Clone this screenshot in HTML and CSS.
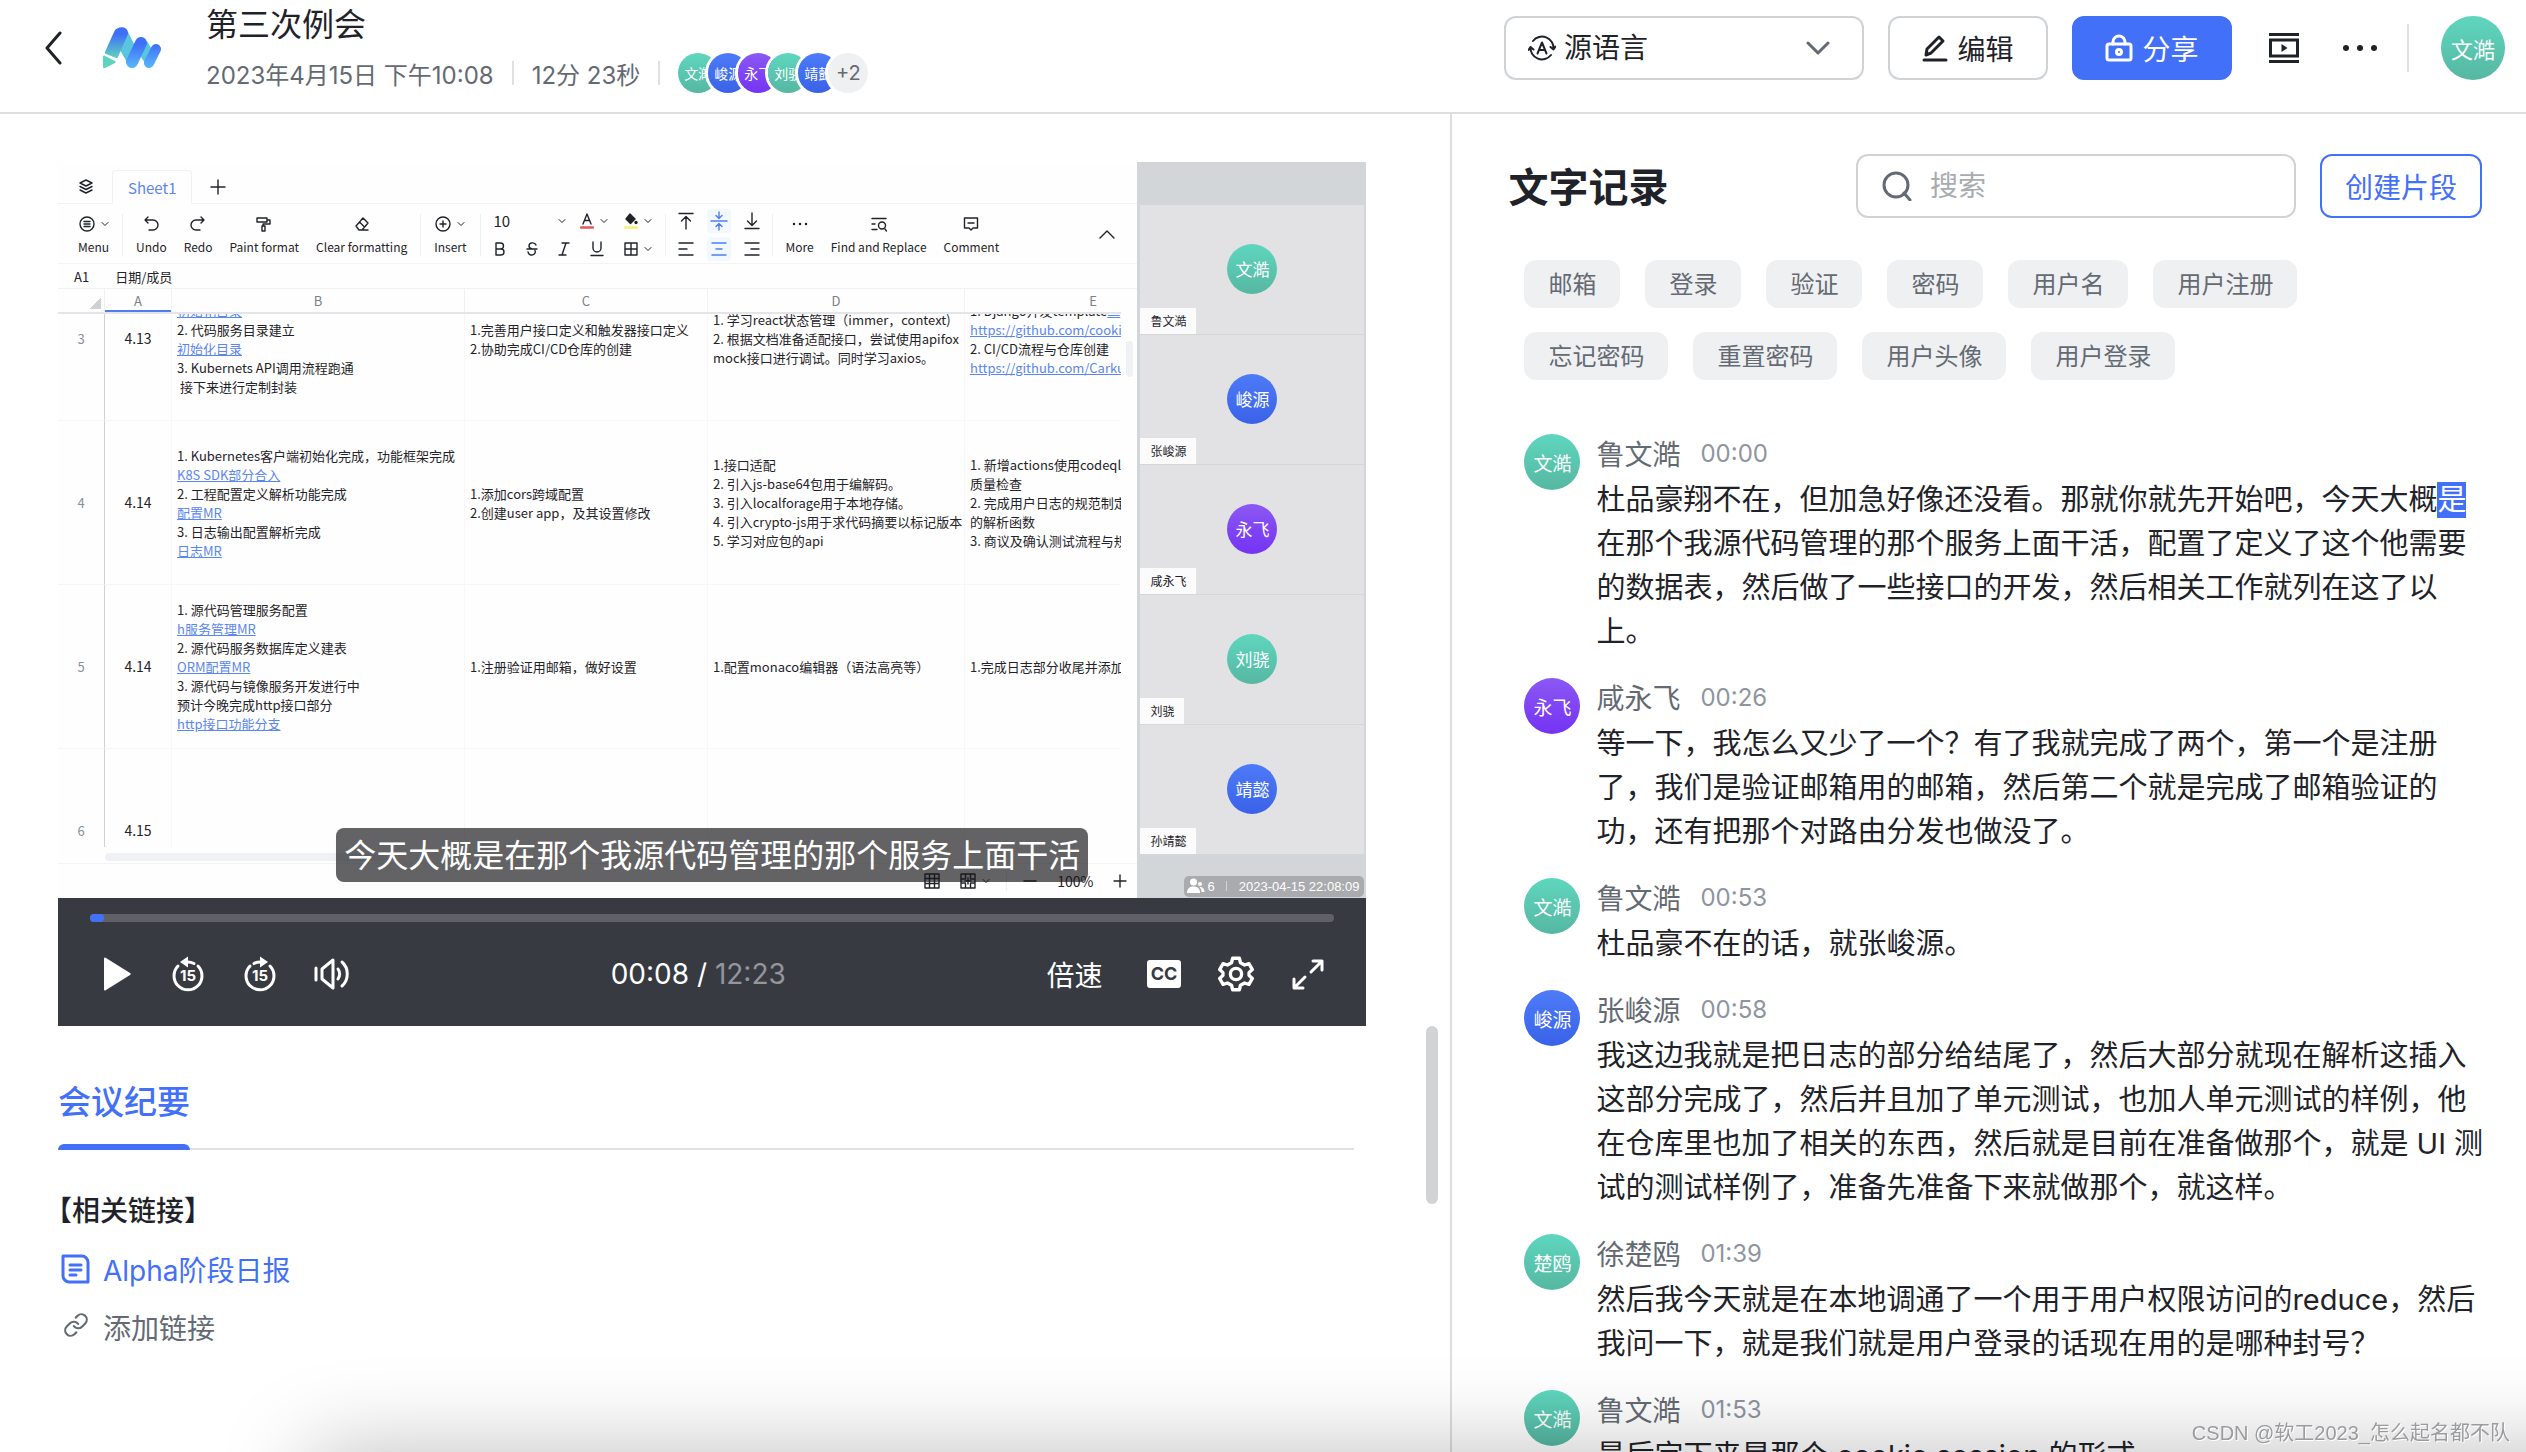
FILE: index.html
```html
<!DOCTYPE html>
<html lang="zh-CN">
<head>
  <meta charset="UTF-8">
  <meta name="viewport" content="width=device-width, initial-scale=1">
  <title>第三次例会</title>
  <link rel="stylesheet" href="styles.css">
</head>
<body>
  <svg class="sprite" aria-hidden="true">
    <symbol id="i-chev" viewBox="0 0 8 8"><path d="M1 2.500l3 3 3-3"/></symbol>
    <symbol id="i-people" viewBox="0 0 18 16"><circle cx="6.500" cy="4" r="3.500"/><path d="M0 15c0-4 2-6.500 6.500-6.500S13 11 13 15z"/><circle cx="13" cy="6" r="2"/><path d="M12.500 9c3.500 0 5 2 5 5h-3c0-2-.5-3.500-2-5z"/></symbol>
  </svg>

  <header class="topbar">
    <button class="back" aria-label="返回">
      <svg width="18" height="34" viewBox="0 0 18 34"><path d="M16 2L3 17l13 15"/></svg>
    </button>
    <svg class="logo" width="60" height="44" viewBox="0 0 60 44">
      <defs>
        <linearGradient id="lg1" gradientUnits="userSpaceOnUse" x1="0" y1="8" x2="0" y2="32"><stop offset="0" stop-color="#3f6ff8"/><stop offset="1" stop-color="#5fd3bd"/></linearGradient>
        <linearGradient id="lg2" gradientUnits="userSpaceOnUse" x1="0" y1="18" x2="0" y2="42"><stop offset="0" stop-color="#3f6ff8"/><stop offset="1" stop-color="#57b8fb"/></linearGradient>
      </defs>
      <path d="M26 6l7 14-7 18-8-14z" fill="#58c6dc"/>
      <path d="M45 15l6 10-6 15-8-12z" fill="#58c6dc"/>
      <path d="M3 26l9-20C15-1 27 0 26 8L16 31c0 1-1 1-2 1L4 28c-1 0-1-1-1-2z" fill="url(#lg1)"/>
      <path d="M1 31c0-1 1-2 2-1l10 5c1 1 1 2 0 2L3 42c-1 0-2 0-2-1z" fill="#5fd3bd"/>
      <path d="M39 17l-9 19" fill="none" stroke="url(#lg2)" stroke-width="12"/>
      <path d="M54 23l-7 14" fill="none" stroke="url(#lg2)" stroke-width="10"/>
    </svg>
    <div class="meeting">
      <h1>第三次例会</h1>
      <div class="meta">
        <span>2023年4月15日 下午10:08</span>
        <span class="sep"></span>
        <span>12分 23秒</span>
        <span class="sep"></span>
        <div class="members">
          <span class="avatar green">文澔</span>
          <span class="avatar blue">峻源</span>
          <span class="avatar purple">永飞</span>
          <span class="avatar green">刘骁</span>
          <span class="avatar blue">靖懿</span>
          <span class="avatar more">+2</span>
        </div>
      </div>
    </div>
    <div class="actions">
      <div class="language">
        <svg width="28" height="28" viewBox="0 0 28 28"><path d="M5 7a11.500 11.500 0 0 1 20.500 8M23 21A11.500 11.500 0 0 1 2.500 13M.500 16l2-3 3 2.500M27.500 12.500l-2 3-3-2.500"/><path d="M9.500 19.500L14 8.500l4.500 11M11 16h6"/></svg>
        <select aria-label="语言">
          <option>源语言</option>
        </select>
        <svg class="arrow" width="24" height="14" viewBox="0 0 24 14"><path d="M2 2l10 10L22 2"/></svg>
      </div>
      <button class="btn">
        <svg width="26" height="28" viewBox="0 0 26 28"><path d="M2 26h22M4 21l1-6L17 3l4 4L9 19z"/></svg>
        编辑
      </button>
      <button class="btn primary">
        <svg width="28" height="28" viewBox="0 0 28 28"><rect x="2" y="10" width="24" height="16" rx="2"/><path d="M8 10V8a6 6 0 0 1 12 0v2"/><circle cx="14" cy="18" r="2.500"/></svg>
        分享
      </button>
      <button class="icon-btn" aria-label="片段">
        <svg width="32" height="32" viewBox="0 0 32 32"><path d="M1 2.500h30M1 29.500h30"/><rect x="2.500" y="8" width="27" height="16"/><path d="M13.500 12l6 4-6 4z" fill="#1f2329" stroke="none"/></svg>
      </button>
      <button class="icon-btn" aria-label="更多">
        <svg width="36" height="8" viewBox="0 0 36 8"><g fill="#1f2329" stroke="none"><circle cx="4" cy="4" r="3"/><circle cx="18" cy="4" r="3"/><circle cx="32" cy="4" r="3"/></g></svg>
      </button>
      <span class="bar"></span>
      <span class="avatar green me">文澔</span>
    </div>
  </header>

  <main>
    <section class="left">
      <div class="player">
        <div class="frame">
          <div class="sheet">
            <div class="sheet-tabs">
              <svg width="16" height="16" viewBox="0 0 16 16"><path d="M8 1l6 3-6 3-6-3zM2 7.500l6 3 6-3M2 11l6 3 6-3"/></svg>
              <span class="sheet-tab">Sheet1</span>
              <svg width="16" height="16" viewBox="0 0 16 16"><path d="M8 1v14M1 8h14"/></svg>
            </div>

            <div class="toolbar">
              <button class="tool"><span><svg width="16" height="16" viewBox="0 0 16 16"><circle cx="8" cy="8" r="7"/><path d="M5 5.500h6M5 8h6M5 10.500h6"/></svg><svg class="c"><use href="#i-chev"/></svg></span>Menu</button>
              <i></i>
              <button class="tool"><span><svg width="16" height="16" viewBox="0 0 16 16"><path d="M5 1L2 4l3 3M2 4h8a5 5 0 0 1 0 10H6"/></svg></span>Undo</button>
              <button class="tool"><span><svg width="16" height="16" viewBox="0 0 16 16"><path d="M11 1l3 3-3 3M14 4H6a5 5 0 0 0 0 10h4"/></svg></span>Redo</button>
              <button class="tool"><span><svg width="16" height="16" viewBox="0 0 16 16"><path d="M1 2h10v4H1zM11 4h3v4H7v2M6 10h3v5H6z"/></svg></span>Paint format</button>
              <button class="tool"><span><svg width="16" height="16" viewBox="0 0 16 16"><path d="M9 2l5 5-6 7H5l-3-4zM5.500 6l5 5M8 14h6"/></svg></span>Clear formatting</button>
              <i></i>
              <button class="tool"><span><svg width="16" height="16" viewBox="0 0 16 16"><circle cx="8" cy="8" r="7"/><path d="M8 5v6M5 8h6"/></svg><svg class="c"><use href="#i-chev"/></svg></span>Insert</button>
              <i></i>
              <div class="format">
                <div class="format-row">
                  <span class="size">10<svg class="c"><use href="#i-chev"/></svg></span>
                  <span class="pick"><svg width="14" height="16" viewBox="0 0 14 16"><path d="M3 11l4-10 4 10M4.500 7.500h5"/><path d="M1 14.500h12" stroke="#e2575b" stroke-width="2.500"/></svg><svg class="c"><use href="#i-chev"/></svg></span>
                  <span class="pick"><svg width="14" height="16" viewBox="0 0 14 16"><path d="M6 1l5 5-4.500 4.500L2 6z" fill="#1f2329"/><circle cx="12" cy="9.500" r="1" fill="#1f2329"/><path d="M1 14.500h12" stroke="#f7f075" stroke-width="2.500"/></svg><svg class="c"><use href="#i-chev"/></svg></span>
                </div>
                <div class="format-row marks">
                  <svg width="12" height="16" viewBox="0 0 12 16"><path d="M2 2h4.500a3 3 0 0 1 0 6H2zM2 8h5a3 3 0 0 1 0 6H2z"/></svg>
                  <svg width="12" height="16" viewBox="0 0 12 16"><path d="M10 4C9 1 3 1 3 5c0 2 1.500 2.500 3 3M1 8h10M9 9.500C11 14 3 16 2 11"/></svg>
                  <svg width="12" height="16" viewBox="0 0 12 16"><path d="M4 2h7M1 14h7M8 2L4 14"/></svg>
                  <svg width="14" height="16" viewBox="0 0 14 16"><path d="M3 1v6a4 4 0 0 0 8 0V1M1 14.500h12"/></svg>
                  <span class="pick"><svg width="14" height="16" viewBox="0 0 14 16"><path d="M1 2h12v12H1zM7 2v12M1 8h12"/></svg><svg class="c"><use href="#i-chev"/></svg></span>
                </div>
              </div>
              <i></i>
              <div class="aligns">
                <svg viewBox="0 0 24 24"><path d="M5 4.500h14M12 20V8M7.500 12L12 7.500l4.500 4.500"/></svg>
                <svg class="on" viewBox="0 0 24 24"><path d="M4 12h16M12 3v6M9 6.500l3 3 3-3M12 21v-6M9 17.500l3-3 3 3"/></svg>
                <svg viewBox="0 0 24 24"><path d="M5 19.500h14M12 4v12M7.500 12l4.500 4.500 4.500-4.500"/></svg>
                <svg viewBox="0 0 24 24"><path d="M5 6h14M5 12h8M5 18h14"/></svg>
                <svg class="on" viewBox="0 0 24 24"><path d="M5 6h14M9 12h6M5 18h14"/></svg>
                <svg viewBox="0 0 24 24"><path d="M5 6h14M11 12h8M5 18h14"/></svg>
              </div>
              <i></i>
              <button class="tool"><span><svg width="16" height="16" viewBox="0 0 16 16"><path d="M2 8h0M8 8h0M14 8h0" stroke-width="2.500"/></svg></span>More</button>
              <button class="tool"><span><svg width="16" height="16" viewBox="0 0 16 16"><path d="M1 2.500h14M1 8h3M1 13.500h5M14 13l1.500 2"/><circle cx="11" cy="9.500" r="3.500"/></svg></span>Find and Replace</button>
              <button class="tool"><span><svg width="16" height="16" viewBox="0 0 16 16"><path d="M1.500 2h13v10H10l-2 2-2-2H1.500zM5 7h6"/></svg></span>Comment</button>
              <svg class="fold" width="16" height="16" viewBox="0 0 16 16"><path d="M1 11l7-7 7 7"/></svg>
            </div>

            <div class="formula"><span>A1</span><span>日期/成员</span></div>

            <div class="grid-view">
              <div class="col-names">
                <span class="corner"></span><span class="current">A</span><span>B</span><span>C</span><span>D</span><span>E</span>
              </div>
              <div class="grid-body">
                <table>
                  <colgroup><col class="w-no"><col class="w-a"><col class="w-b"><col class="w-c"><col class="w-d"><col class="w-d"></colgroup>
                  <tbody>
                    <tr>
                      <th>3</th>
                      <td class="date">4.13</td>
                      <td>1. 代码服务初始化<br><a href="#">初始化目录</a><br>2. 代码服务目录建立<br><a href="#">初始化目录</a><br>3. Kubernets API调用流程跑通<br>&nbsp;接下来进行定制封装</td>
                      <td>1.完善用户接口定义和触发器接口定义<br>2.协助完成CI/CD仓库的创建</td>
                      <td>1. 学习react状态管理（immer，context)<br>2. 根据文档准备适配接口，尝试使用apifox<br>mock接口进行调试。同时学习axios。</td>
                      <td>1. Django开发template<a href="#">二</a><br><a href="#">https://github.com/cookiecutter</a><br>2. CI/CD流程与仓库创建<br><a href="#">https://github.com/CarkusL</a></td>
                    </tr>
                    <tr>
                      <th>4</th>
                      <td class="date">4.14</td>
                      <td>1. Kubernetes客户端初始化完成，功能框架完成<br><a href="#">K8S SDK部分合入</a><br>2. 工程配置定义解析功能完成<br><a href="#">配置MR</a><br>3. 日志输出配置解析完成<br><a href="#">日志MR</a></td>
                      <td>1.添加cors跨域配置<br>2.创建user app，及其设置修改</td>
                      <td>1.接口适配<br>2. 引入js-base64包用于编解码。<br>3. 引入localforage用于本地存储。<br>4. 引入crypto-js用于求代码摘要以标记版本<br>5. 学习对应包的api</td>
                      <td>1. 新增actions使用codeql<br>质量检查<br>2. 完成用户日志的规范制定<br>的解析函数<br>3. 商议及确认测试流程与规范</td>
                    </tr>
                    <tr>
                      <th>5</th>
                      <td class="date">4.14</td>
                      <td>1. 源代码管理服务配置<br><a href="#">h服务管理MR</a><br>2. 源代码服务数据库定义建表<br><a href="#">ORM配置MR</a><br>3. 源代码与镜像服务开发进行中<br>预计今晚完成http接口部分<br><a href="#">http接口功能分支</a></td>
                      <td>1.注册验证用邮箱，做好设置</td>
                      <td>1.配置monaco编辑器（语法高亮等）</td>
                      <td>1.完成日志部分收尾并添加</td>
                    </tr>
                    <tr>
                      <th>6</th>
                      <td class="date">4.15</td>
                      <td></td>
                      <td></td>
                      <td></td>
                      <td></td>
                    </tr>
                  </tbody>
                </table>
              </div>
              <span class="v-thumb"></span>
            </div>

            <div class="h-scroll"><span></span></div>
            <div class="sheet-status">
              <svg width="16" height="16" viewBox="0 0 16 16"><path d="M1 1h14v14H1zM5.500 1v14M10.500 1v14M1 5.500h14M1 10.500h14"/></svg>
              <span class="pick"><svg width="16" height="16" viewBox="0 0 16 16"><path d="M1 1h14v14H1zM5.500 1v5H1M10.500 1v5H15M5.500 15v-5H1M10.500 15v-5H15M8 5v6M5 8h6"/></svg><svg class="c"><use href="#i-chev"/></svg></span>
              <i></i>
              <svg width="14" height="14" viewBox="0 0 14 14"><path d="M1 7h12"/></svg>
              <span class="zoom">100%</span>
              <svg width="14" height="14" viewBox="0 0 14 14"><path d="M7 1v12M1 7h12"/></svg>
            </div>
          </div>

          <aside class="people">
            <div class="person"><span class="avatar green">文澔</span><span class="tag-name">鲁文澔</span></div>
            <div class="person"><span class="avatar blue">峻源</span><span class="tag-name">张峻源</span></div>
            <div class="person"><span class="avatar purple">永飞</span><span class="tag-name">咸永飞</span></div>
            <div class="person"><span class="avatar green">刘骁</span><span class="tag-name">刘骁</span></div>
            <div class="person"><span class="avatar blue">靖懿</span><span class="tag-name">孙靖懿</span></div>
          </aside>

          <div class="stamp"><svg width="18" height="16"><use href="#i-people"/></svg>6<i></i>2023-04-15 22:08:09</div>
          <p class="subtitle">今天大概是在那个我源代码管理的那个服务上面干活</p>
        </div>

        <div class="controls">
          <div class="progress"><span></span></div>
          <div class="control-row">
            <div class="side">
              <button aria-label="播放"><svg width="36" height="36" viewBox="0 0 36 36"><path d="M6 3c0-1.500 1-2 2-1l24 15c1 .500 1 1.500 0 2L8 34c-1 1-2 .5-2-1z" fill="#fff" stroke="none"/></svg></button>
              <button aria-label="后退15秒"><svg width="36" height="36" viewBox="0 0 36 36"><path d="M8 10a14 14 0 1 0 20 0M16 6a14 14 0 0 1 8 1.500"/><path d="M18 .500v11L10 6z" fill="#fff" stroke="none"/><text x="18" y="25">15</text></svg></button>
              <button aria-label="前进15秒"><svg width="36" height="36" viewBox="0 0 36 36"><path d="M28 10a14 14 0 1 1-20 0M20 6a14 14 0 0 0-8 1.500"/><path d="M18 .500v11L26 6z" fill="#fff" stroke="none"/><text x="18" y="25">15</text></svg></button>
              <button aria-label="音量"><svg width="36" height="36" viewBox="0 0 36 36"><path d="M2 12v12M8 13v10l11 9V4L8 13zM24 13c2 3 2 7 0 10M28 6c7 6 7 18 0 24"/></svg></button>
            </div>
            <div class="time">00:08 / <span>12:23</span></div>
            <div class="side">
              <button class="speed">倍速</button>
              <button aria-label="字幕"><svg width="36" height="36" viewBox="0 0 36 36"><rect x="1" y="4" width="34" height="28" rx="3" fill="#fff" stroke="none"/><text class="cc" x="18" y="24">CC</text></svg></button>
              <button aria-label="设置"><svg width="36" height="36" viewBox="0 0 32 32"><path d="M13 2h6l1 4 3.600 2 3.900-1.200 3 5.200-2.900 2.800v2.400l2.900 2.800-3 5.200-3.900-1.200L20 26l-1 4h-6l-1-4-3.600-2-3.900 1.200-3-5.200 2.900-2.800v-2.400L1.500 12l3-5.200L8.400 8 12 6z"/><circle cx="16" cy="16" r="5"/></svg></button>
              <button aria-label="全屏"><svg width="36" height="36" viewBox="0 0 36 36"><path d="M23 5h9v9M32 5L21 16M13 32H4v-9M4 32l11-11"/></svg></button>
            </div>
          </div>
        </div>
      </div>

      <div class="tabs"><a href="#minutes">会议纪要</a></div>
      <div class="minutes" id="minutes">
        <h2>【相关链接】</h2>
        <a class="doc" href="#"><svg width="30" height="32" viewBox="0 0 30 32"><path d="M3 3h19c3 0 6 3 6 6v20H9c-3 0-6-3-6-6zM10 12h11M10 17h11M10 22h6"/></svg>Alpha阶段日报</a>
        <button class="add"><svg width="26" height="26" viewBox="0 0 24 24"><path d="M10 13a5 5 0 0 0 7.540.540l3-3a5 5 0 0 0-7.070-7.070l-1.720 1.710"/><path d="M14 11a5 5 0 0 0-7.540-.540l-3 3a5 5 0 0 0 7.070 7.070l1.710-1.710"/></svg>添加链接</button>
      </div>
      <span class="scroll-thumb"></span>
    </section>

    <section class="right">
      <div class="transcript-head">
        <h2>文字记录</h2>
        <label class="search">
          <svg width="30" height="30" viewBox="0 0 30 30"><circle cx="14" cy="14" r="12"/><path d="M22 22l6 7"/></svg>
          <input type="text" placeholder="搜索" aria-label="搜索">
        </label>
        <button class="create">创建片段</button>
      </div>
      <div class="keywords">
        <button>邮箱</button><button>登录</button><button>验证</button><button>密码</button><button>用户名</button><button>用户注册</button>
        <button>忘记密码</button><button>重置密码</button><button>用户头像</button><button>用户登录</button>
      </div>

      <div class="transcript">
        <article>
          <span class="avatar green">文澔</span>
          <div>
            <div class="speaker">鲁文澔 <time>00:00</time></div>
            <p>杜品豪翔不在，但加急好像还没看。那就你就先开始吧，今天大概<mark>是</mark>在那个我源代码管理的那个服务上面干活，配置了定义了这个他需要的数据表，然后做了一些接口的开发，然后相关工作就列在这了以上。</p>
          </div>
        </article>
        <article>
          <span class="avatar purple">永飞</span>
          <div>
            <div class="speaker">咸永飞 <time>00:26</time></div>
            <p>等一下，我怎么又少了一个？有了我就完成了两个，第一个是注册了，我们是验证邮箱用的邮箱，然后第二个就是完成了邮箱验证的功，还有把那个对路由分发也做没了。</p>
          </div>
        </article>
        <article>
          <span class="avatar green">文澔</span>
          <div>
            <div class="speaker">鲁文澔 <time>00:53</time></div>
            <p>杜品豪不在的话，就张峻源。</p>
          </div>
        </article>
        <article>
          <span class="avatar blue">峻源</span>
          <div>
            <div class="speaker">张峻源 <time>00:58</time></div>
            <p>我这边我就是把日志的部分给结尾了，然后大部分就现在解析这插入这部分完成了，然后并且加了单元测试，也加人单元测试的样例，他在仓库里也加了相关的东西，然后就是目前在准备做那个，就是 UI 测试的测试样例了，准备先准备下来就做那个，就这样。</p>
          </div>
        </article>
        <article>
          <span class="avatar green">楚鸥</span>
          <div>
            <div class="speaker">徐楚鸥 <time>01:39</time></div>
            <p>然后我今天就是在本地调通了一个用于用户权限访问的reduce，然后我问一下，就是我们就是用户登录的话现在用的是哪种封号？</p>
          </div>
        </article>
        <article>
          <span class="avatar green">文澔</span>
          <div>
            <div class="speaker">鲁文澔 <time>01:53</time></div>
            <p>最后定下来是那个 cookie session 的形式</p>
          </div>
        </article>
      </div>
    </section>
  </main>

  <div class="dock-shadow"></div>
  <div class="watermark">CSDN @软工2023_怎么起名都不队</div>
</body>
</html>
```
FILE: styles.css
```css
* {
  box-sizing: border-box;
}

body {
  margin: 0;
  height: 100vh;
  overflow: hidden;
  display: flex;
  flex-direction: column;
  font-family: Inter, "Noto Sans CJK SC", sans-serif;
  font-size: 28px;
  color: #1f2329;
  background: #fff;
}

h1, h2, p {
  margin: 0;
}

button, input, select {
  font: inherit;
  color: inherit;
  border: 0;
  padding: 0;
  background: none;
}

a {
  color: #4370f8;
  text-decoration: none;
}

svg {
  flex: none;
  fill: none;
  stroke: currentColor;
  stroke-width: 3;
  stroke-linecap: round;
  stroke-linejoin: round;
}

.sprite {
  display: none;
}

/* avatars */
.avatar {
  flex: none;
  display: flex;
  align-items: center;
  justify-content: center;
  width: 56px;
  height: 56px;
  border-radius: 50%;
  font-size: 19px;
  white-space: nowrap;
  color: #fff;
}

.green {
  background: linear-gradient(#5fd6be, #56b7a2);
}

.blue {
  background: linear-gradient(#4d7bf8, #3a62e8);
}

.purple {
  background: linear-gradient(#8b58f3, #7433f3);
}

/* top bar */
.topbar {
  flex: none;
  display: flex;
  align-items: center;
  height: 114px;
  padding: 0 21px 16px 44px;
  border-bottom: 2px solid #dcdee0;
}

.back {
  display: flex;
}

.logo {
  margin: 0 44px 0 40px;
  stroke: none;
}

.meeting {
  display: flex;
  flex-direction: column;
  gap: 6px;
}

.meeting h1 {
  font-size: 32px;
  font-weight: 400;
  line-height: 44px;
}

.meta {
  display: flex;
  align-items: center;
  gap: 18px;
  height: 40px;
  font-size: 24px;
  color: #646a73;
}

.sep {
  width: 2px;
  height: 24px;
  background: #dee0e3;
}

.members {
  display: flex;
}

.members .avatar {
  width: 40px;
  height: 40px;
  margin-right: -10px;
  font-size: 14px;
  box-shadow: 0 0 0 3px #fff;
}

.members .more {
  font-size: 20px;
  color: #646a73;
  background: #eff0f1;
}

.actions {
  display: flex;
  align-items: center;
  gap: 24px;
  margin-left: auto;
}

.language {
  display: flex;
  align-items: center;
  gap: 8px;
  width: 360px;
  height: 64px;
  padding: 0 32px 0 22px;
  border: 2px solid #d0d3d6;
  border-radius: 12px;
}

.language svg {
  stroke-width: 2;
}

.language select {
  flex: 1;
  appearance: none;
}

.language .arrow {
  stroke-width: 3;
  color: #646a73;
}

.btn {
  display: flex;
  align-items: center;
  justify-content: center;
  gap: 9px;
  width: 160px;
  height: 64px;
  border: 2px solid #d0d3d6;
  border-radius: 12px;
}

.btn.primary {
  color: #fff;
  border-color: #4370f8;
  background: #4370f8;
}

.icon-btn {
  display: flex;
  margin-left: 12px;
}

.icon-btn + .icon-btn {
  margin-left: 18px;
}

.icon-btn svg {
  stroke-linecap: butt;
  stroke-linejoin: miter;
}

.bar {
  width: 2px;
  height: 48px;
  margin: 0 8px 0 5px;
  background: #dee0e3;
}

.avatar.me {
  width: 64px;
  height: 64px;
  font-size: 22px;
}

/* columns */
main {
  flex: 1;
  min-height: 0;
  display: flex;
}

.left {
  position: relative;
  width: 57.5%;
  padding: 48px 84px 0 58px;
  border-right: 2px solid #dcdee0;
}

.scroll-thumb {
  position: absolute;
  top: 912px;
  right: 12px;
  width: 12px;
  height: 178px;
  border-radius: 6px;
  background: #d2d3d5;
}

/* video frame */
.frame {
  position: relative;
  display: flex;
  aspect-ratio: 16 / 9;
  font-family: "Noto Sans CJK SC", sans-serif;
  font-size: 13px;
}

.frame svg {
  stroke-width: 1.4;
}

.frame svg.c {
  width: 8px;
  height: 8px;
  stroke-width: 1;
}

.sheet {
  flex: 1;
  min-width: 0;
  display: flex;
  flex-direction: column;
  background: #fefefe;
}

.sheet-tabs {
  display: flex;
  align-items: center;
  gap: 18px;
  height: 42px;
  padding: 8px 0 0 20px;
  border-bottom: 1px solid #f0f1f2;
}

.sheet-tab {
  height: 34px;
  padding: 0 15px;
  line-height: 34px;
  font-size: 15px;
  color: #5b86ee;
  border: 1px solid #f0f1f2;
  border-bottom-color: #fefefe;
  border-radius: 4px 4px 0 0;
}

.toolbar {
  display: flex;
  align-items: center;
  gap: 17px;
  height: 60px;
  padding: 2px 22px 0 20px;
  border-bottom: 1px solid #f3f4f5;
}

.toolbar > i,
.sheet-status i {
  width: 1px;
  height: 42px;
  margin: 0 -4px;
  background: #eeeff0;
}

.tool {
  display: flex;
  flex-direction: column;
  align-items: center;
  gap: 6px;
  padding-top: 2px;
  font-size: 12px;
  line-height: 18px;
  white-space: nowrap;
}

.tool span,
.pick {
  display: flex;
  align-items: center;
  gap: 6px;
}

.format-row {
  display: flex;
  align-items: center;
  height: 28px;
}

.format-row > .pick {
  width: 44px;
}

.format-row > .pick:last-child {
  width: 28px;
}

.size {
  display: flex;
  align-items: center;
  justify-content: space-between;
  width: 72px;
  margin-right: 14px;
  font-size: 15px;
}

.format-row.marks {
  gap: 20px;
}

.aligns {
  display: grid;
  grid-template-columns: repeat(3, 24px);
  gap: 4px 9px;
  margin: 0 -5px;
}

.aligns svg {
  width: 24px;
  height: 24px;
  border-radius: 4px;
}

.aligns .on {
  color: #4f7df0;
  background: #f2f8ff;
}

.fold {
  margin-left: auto;
}

.formula {
  display: flex;
  gap: 26px;
  height: 25px;
  padding-left: 16px;
  line-height: 25px;
  border-bottom: 1px solid #f0f1f2;
}

.grid-view {
  position: relative;
  flex: 1;
  min-height: 0;
  display: flex;
  flex-direction: column;
  padding-right: 16px;
}

.v-thumb {
  position: absolute;
  top: 52px;
  right: 4px;
  width: 7px;
  height: 36px;
  border-radius: 4px;
  background: #f0f1f4;
}

.col-names {
  display: grid;
  grid-template-columns: 47px 67px 293px 243px 257px 257px;
  overflow: hidden;
  flex: none;
  height: 25px;
  line-height: 24px;
  text-align: center;
  color: #7b8088;
  border-bottom: 2px solid #e4e5e8;
}

.col-names span {
  border-right: 1px solid #eff0f2;
}

.col-names .current {
  height: 25px;
  box-shadow: inset 0 -4px #4f7df0;
}

.corner {
  background: linear-gradient(135deg, transparent 50%, #cfd1d5 50%) no-repeat 32px 8px / 11px 12px;
}

.grid-body {
  flex: 1;
  min-height: 0;
  overflow: hidden;
}

/* the sheet is scrolled down a little, row 3 is cut at the top */
.grid-body table {
  width: 1164px;
  margin-top: -57px;
  table-layout: fixed;
  border-collapse: separate;
  border-spacing: 0;
}

.w-no { width: 47px; }
.w-a { width: 67px; }
.w-b { width: 293px; }
.w-c { width: 243px; }
.w-d { width: 257px; }

.grid-body tr {
  height: 164px;
}

.grid-body th,
.grid-body td {
  padding: 0 0 0 5px;
  line-height: 19px;
  white-space: nowrap;
  overflow: hidden;
  border-right: 1px solid #f7f7f8;
  border-bottom: 1px solid #f6f6f7;
}

.grid-body th {
  padding: 0;
  font-weight: 400;
  color: #8a8f96;
  border-right: 1px solid #cfd1d5;
}

.grid-body .date {
  padding: 0;
  text-align: center;
  font-size: 14px;
}

.grid-body a {
  color: #5b86ee;
  text-decoration: underline;
}

.h-scroll {
  height: 17px;
  padding: 6px 0 0 47px;
  border-bottom: 1px solid #f3f4f5;
}

.h-scroll span {
  display: block;
  width: 280px;
  height: 8px;
  border-radius: 4px;
  background: #f0f1f4;
}

.sheet-status {
  display: flex;
  align-items: center;
  justify-content: flex-end;
  gap: 20px;
  height: 34px;
  padding-right: 10px;
}

.sheet-status i {
  height: 20px;
}

.zoom {
  font-size: 14px;
}

.people {
  width: 229px;
  padding: 43px 2px 0 3px;
  background: #d2d6d9;
}

.person {
  position: relative;
  display: flex;
  align-items: center;
  justify-content: center;
  height: 130px;
  padding-bottom: 2px;
  border-bottom: 1px solid #d5d6d8;
  background: #e2e2e4;
}

.person .avatar {
  width: 50px;
  height: 50px;
  font-size: 17px;
}

.tag-name {
  position: absolute;
  left: 0;
  bottom: 0;
  padding: 0 10px;
  font-size: 12px;
  line-height: 26px;
  background: #fbfbfc;
}

.stamp {
  position: absolute;
  right: 2px;
  bottom: 1px;
  display: flex;
  align-items: center;
  gap: 2px;
  height: 21px;
  padding: 0 5px 0 3px;
  border-radius: 5px;
  font-family: "Liberation Sans", sans-serif;
  font-size: 13px;
  color: #fff;
  background: #a9abae;
}

.stamp i {
  width: 1px;
  height: 10px;
  margin: 0 10px 0 9px;
  background: #d5d6d8;
}

.stamp svg {
  fill: #fff;
  stroke: none;
}

.subtitle {
  position: absolute;
  bottom: 16px;
  left: 50%;
  transform: translateX(-50%);
  padding: 0 8px 4px;
  border-radius: 8px;
  font-size: 32px;
  line-height: 50px;
  white-space: nowrap;
  color: #fff;
  background: rgba(22, 23, 26, .67);
}

/* player controls */
.controls {
  height: 128px;
  padding: 16px 32px 0;
  color: #fff;
  background: #383a42;
}

.progress {
  height: 8px;
  border-radius: 4px;
  background: #5f6166;
}

.progress span {
  display: block;
  width: 14px;
  height: 8px;
  border-radius: 4px;
  background: #4370f8;
}

.control-row {
  display: flex;
  align-items: center;
  justify-content: space-between;
  height: 104px;
  padding: 0 8px;
}

.side {
  display: flex;
  gap: 36px;
}

.side button {
  display: flex;
  align-items: center;
}

.side .speed {
  margin-right: 8px;
}

.side text {
  font-size: 15px;
  font-weight: 700;
  text-anchor: middle;
  fill: #fff;
  stroke: none;
}

.side .cc {
  font-size: 18px;
  fill: #383a42;
}

.time {
  font-size: 28px;
}

.time span {
  color: #94969b;
}

/* minutes */
.tabs {
  margin: 44px 12px 0 0;
  border-bottom: 2px solid #dee0e3;
}

.tabs a {
  display: inline-block;
  margin-bottom: -2px;
  vertical-align: top;
  font-size: 33px;
  font-weight: 500;
  line-height: 64px;
}

.tabs a::after {
  content: "";
  display: block;
  height: 6px;
  margin-top: 10px;
  border-radius: 6px 6px 0 0;
  background: #4370f8;
}

.minutes {
  display: flex;
  flex-direction: column;
  align-items: flex-start;
  padding-top: 32px;
}

.minutes h2 {
  font-size: 28px;
  font-weight: 500;
  line-height: 58px;
  font-feature-settings: "halt";
}

.doc,
.add {
  display: flex;
  align-items: center;
  gap: 14px;
  height: 58px;
}

.doc svg {
  margin: 0 -1px 0 2px;
}

.add svg {
  margin: 0 0 4px 5px;
  stroke-width: 2;
}

.add {
  color: #646a73;
}

/* transcript */
.right {
  flex: 1;
  min-width: 0;
  padding: 40px 44px 0 56px;
}

.transcript-head {
  display: flex;
  align-items: center;
  gap: 24px;
}

.transcript-head h2 {
  margin-right: auto;
  padding-top: 3px;
  font-size: 40px;
  font-weight: 700;
  line-height: 61px;
}

.search {
  display: flex;
  align-items: center;
  gap: 18px;
  width: 440px;
  height: 64px;
  padding: 0 24px;
  border: 2px solid #d0d3d6;
  border-radius: 12px;
}

.search svg {
  color: #646a73;
}

.search input {
  flex: 1;
  min-width: 0;
  outline: 0;
}

.search input::placeholder {
  color: #a8abb0;
}

.create {
  height: 64px;
  padding: 0 23px;
  color: #4370f8;
  border: 2px solid #4370f8;
  border-radius: 12px;
}

.keywords {
  display: flex;
  flex-wrap: wrap;
  gap: 24px 25px;
  margin: 42px 100px 54px 16px;
}

.keywords button {
  height: 48px;
  padding: 0 24px 4px;
  border-radius: 12px;
  font-size: 24px;
  color: #646a73;
  background: #eff0f2;
}

/* runs a little past the search row on the right */
.transcript {
  margin-right: -10px;
  padding-left: 16px;
}

.transcript article {
  display: flex;
  gap: 16px;
  margin-bottom: 24px;
}

.speaker {
  display: flex;
  align-items: center;
  gap: 20px;
  height: 40px;
  margin-bottom: 4px;
  padding-bottom: 2px;
  color: #646a73;
}

.speaker time {
  font-size: 24px;
  color: #8f959e;
}

.transcript p {
  font-size: 29px;
  line-height: 44px;
}

.transcript mark {
  display: inline-block;
  line-height: 36px;
  color: #fff;
  background: #4370f8;
}

/* shade along the bottom edge of the window */
.dock-shadow {
  position: fixed;
  left: 310px;
  right: -200px;
  bottom: -100px;
  height: 100px;
  box-shadow: 0 0 90px rgba(0, 0, 0, .26);
}

.watermark {
  position: fixed;
  right: 16px;
  bottom: 6px;
  font-family: "Liberation Sans", "Noto Sans CJK SC", sans-serif;
  font-size: 20px;
  color: #9a9b9e;
  text-shadow: 1px 1px #fff;
}
```
